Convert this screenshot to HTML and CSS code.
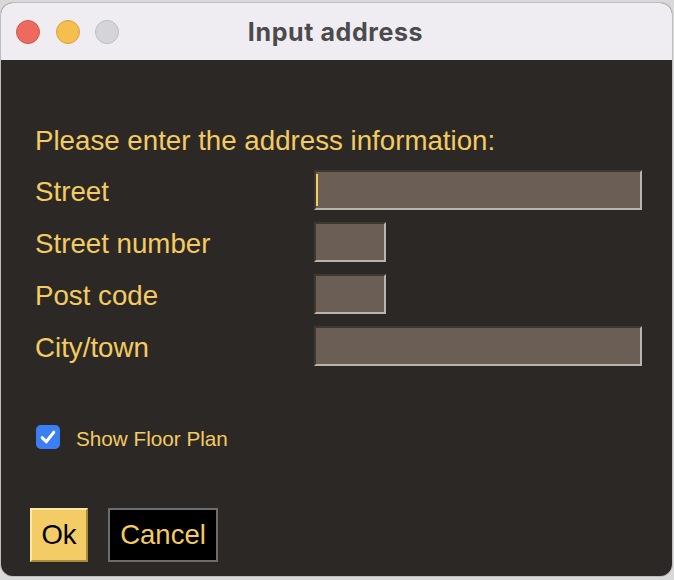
FILE: index.html
```html
<!DOCTYPE html>
<html>
<head>
<meta charset="utf-8">
<title>Input address</title>
<link rel="stylesheet" href="styles.css">
</head>
<body>
<div class="window">
  <div class="titlebar">
    <div class="lights">
      <span class="light red"></span>
      <span class="light yellow"></span>
      <span class="light gray"></span>
    </div>
    <div class="title">Input address</div>
    <div></div>
  </div>
  <div class="content">
    <div class="heading">Please enter the address information:</div>
    <div class="form">
      <label class="label">Street</label>
      <div class="field wide"><span class="caret"></span></div>
      <label class="label">Street number</label>
      <div class="field short"></div>
      <label class="label">Post code</label>
      <div class="field short"></div>
      <label class="label">City/town</label>
      <div class="field wide"></div>
    </div>
    <div class="check-row">
      <span class="checkbox">
        <svg width="24" height="24" viewBox="0 0 24 24"><path d="M6.2 12.6 L10.2 16.8 L17.8 7.2" fill="none" stroke="#fff" stroke-width="3" stroke-linecap="round" stroke-linejoin="round"/></svg>
      </span>
      <span class="check-label">Show Floor Plan</span>
    </div>
    <div class="buttons">
      <button class="btn ok">Ok</button>
      <button class="btn cancel">Cancel</button>
    </div>
  </div>
</div>
</body>
</html>
```
FILE: styles.css
```css
html, body {
  margin: 0;
  height: 100%;
}
body {
  background: #d9d9d9;
  padding: 3px 2px 4px 1px;
  box-sizing: border-box;
  font-family: "Liberation Sans", Arial, sans-serif;
}
.window {
  height: 573px;
  width: 671px;
  border-radius: 12px;
  overflow: hidden;
  background: #2c2825;
  display: flex;
  flex-direction: column;
  box-shadow: 0 0 0 1px #bdbdbd;
}
.titlebar {
  height: 57px;
  flex: none;
  background: #efedf2;
  display: grid;
  grid-template-columns: 1fr auto 1fr;
  align-items: center;
}
.lights {
  display: flex;
  gap: 15.5px;
  padding-left: 15px;
  padding-top: 1px;
}
.light {
  width: 24px;
  height: 24px;
  border-radius: 50%;
  box-sizing: border-box;
}
.red { background: #ee6a5f; border: 1px solid #d5574b; }
.yellow { background: #f6be4f; border: 1px solid #d9a13b; }
.gray { background: #d5d4d9; border: 1px solid #bebdc2; }
.title {
  font-family: Inter, "Liberation Sans", sans-serif;
  font-weight: 700;
  font-size: 25px;
  letter-spacing: 0.6px;
  color: #4b4b4c;
  padding-top: 1px;
  padding-right: 2px;
}
.content {
  flex: 1;
  padding: 61px 0 0 34px;
  color: #f3cb62;
}
.heading {
  font-size: 27.7px;
  line-height: 40px;
  margin-bottom: 9px;
}
.form {
  display: grid;
  grid-template-columns: 279px auto;
  grid-auto-rows: 40px;
  row-gap: 12px;
}
.label {
  font-size: 27.7px;
  line-height: 44px;
  height: 40px;
  white-space: nowrap;
}
.field {
  height: 40px;
  box-sizing: border-box;
  background: #6b5f55;
  border-style: solid;
  border-width: 2px;
  border-color: #3f3832 #bbb4ac #bbb4ac #3f3832;
  padding: 2px 0;
}
.wide { width: 328px; }
.short { width: 72px; }
.caret {
  display: block;
  width: 2px;
  height: 32px;
  background: #f5cd5f;
}
.check-row {
  display: flex;
  align-items: center;
  margin-top: 59px;
  margin-left: 1px;
  height: 24px;
}
.checkbox {
  width: 24px;
  height: 24px;
  border-radius: 5px;
  background: #3b7ff5;
  display: block;
}
.checkbox svg { display: block; }
.check-label {
  margin-left: 16px;
  font-size: 20.7px;
  padding-top: 3px;
}
.buttons {
  display: flex;
  gap: 20px;
  margin-top: 59px;
  margin-left: -5px;
}
.btn {
  height: 54px;
  font-family: "Liberation Sans", Arial, sans-serif;
  font-size: 27.5px;
  border-style: solid;
  border-width: 2px;
  margin: 0;
  line-height: 50px;
  border-radius: 0;
  padding: 0;
}
.ok {
  width: 58px;
  background: #f4cc66;
  color: #000;
  border-color: #fde9a3 #a78b3d #a78b3d #fde9a3;
}
.cancel {
  width: 110px;
  background: #000;
  color: #f3cb62;
  border-color: #6d6d6d;
}
```
